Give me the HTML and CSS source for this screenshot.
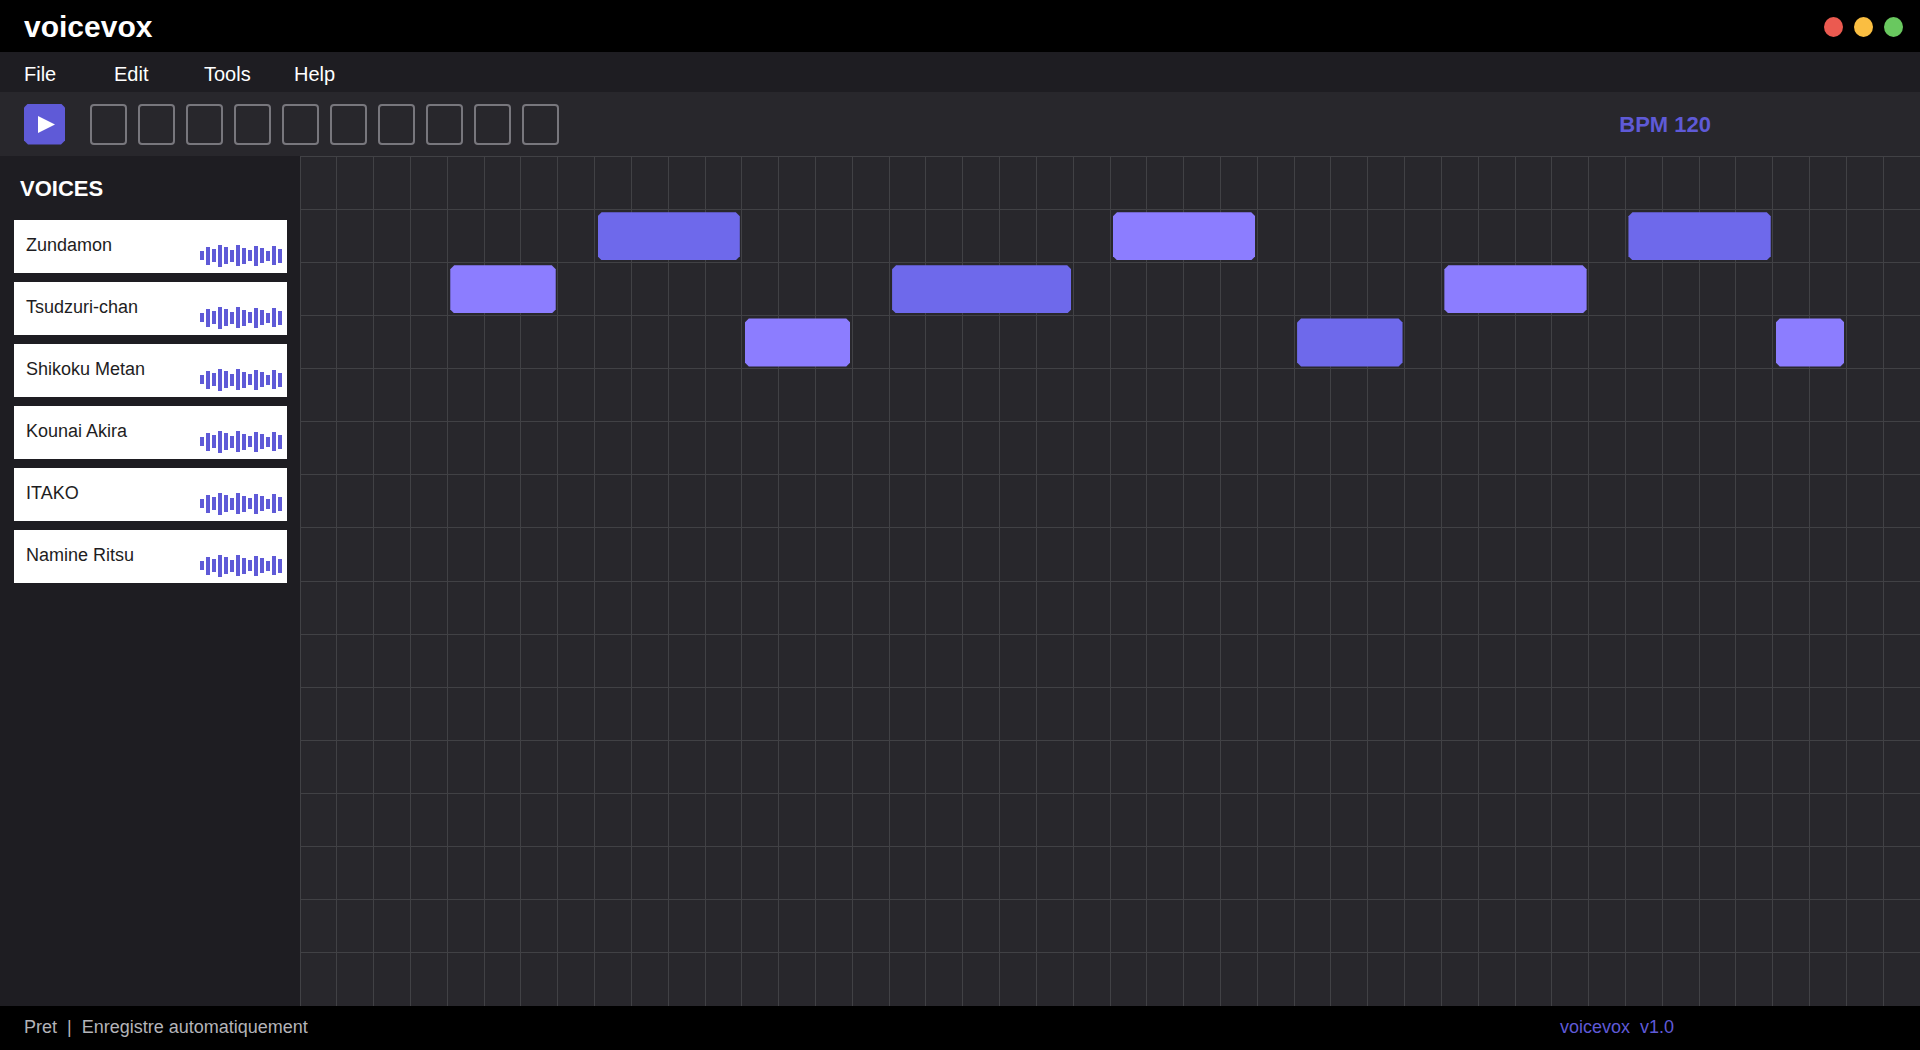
FILE: index.html
```html
<!DOCTYPE html>
<html lang="fr">
<head>
<meta charset="utf-8">
<title>voicevox</title>
<link rel="stylesheet" href="styles.css">
</head>
<body>
<header class="titlebar">
  <h1 class="logo">voicevox</h1>
  <div class="window-controls">
    <button class="dot dot-close" type="button" aria-label="Close"></button>
    <button class="dot dot-min" type="button" aria-label="Minimize"></button>
    <button class="dot dot-max" type="button" aria-label="Maximize"></button>
  </div>
</header>
<nav class="menubar">
  <button class="menu-item" type="button">File</button>
  <button class="menu-item" type="button">Edit</button>
  <button class="menu-item" type="button">Tools</button>
  <button class="menu-item" type="button">Help</button>
</nav>
<div class="toolbar">
  <button class="play" type="button" aria-label="Play"><svg class="play-icon" viewBox="0 0 41 41"><path d="M14 12L31 20.500L14 29Z"/></svg></button>
  <div class="tools">
    <button class="tool" type="button" aria-label="Tool 1"></button>
    <button class="tool" type="button" aria-label="Tool 2"></button>
    <button class="tool" type="button" aria-label="Tool 3"></button>
    <button class="tool" type="button" aria-label="Tool 4"></button>
    <button class="tool" type="button" aria-label="Tool 5"></button>
    <button class="tool" type="button" aria-label="Tool 6"></button>
    <button class="tool" type="button" aria-label="Tool 7"></button>
    <button class="tool" type="button" aria-label="Tool 8"></button>
    <button class="tool" type="button" aria-label="Tool 9"></button>
    <button class="tool" type="button" aria-label="Tool 10"></button>
  </div>
  <span class="bpm">BPM 120</span>
</div>
<main class="workspace">
  <aside class="voices">
    <h2 class="voices-title">VOICES</h2>
    <ul class="voice-list">
      <li class="voice"><span class="voice-name">Zundamon</span><svg class="wave" viewBox="0 0 82 22"><use href="#wave"/></svg></li>
      <li class="voice"><span class="voice-name">Tsudzuri-chan</span><svg class="wave" viewBox="0 0 82 22"><use href="#wave"/></svg></li>
      <li class="voice"><span class="voice-name">Shikoku Metan</span><svg class="wave" viewBox="0 0 82 22"><use href="#wave"/></svg></li>
      <li class="voice"><span class="voice-name">Kounai Akira</span><svg class="wave" viewBox="0 0 82 22"><use href="#wave"/></svg></li>
      <li class="voice"><span class="voice-name">ITAKO</span><svg class="wave" viewBox="0 0 82 22"><use href="#wave"/></svg></li>
      <li class="voice"><span class="voice-name">Namine Ritsu</span><svg class="wave" viewBox="0 0 82 22"><use href="#wave"/></svg></li>
    </ul>
  </aside>
  <section class="roll" aria-label="Piano roll">
    <canvas class="roll-lines" id="lines"></canvas>
    <div class="notes">
      <div class="note note-light row-3 col-5 len-3"></div>
      <div class="note row-2 col-9 len-4"></div>
      <div class="note note-light row-4 col-13 len-3"></div>
      <div class="note row-3 col-17 len-5"></div>
      <div class="note note-light row-2 col-23 len-4"></div>
      <div class="note row-4 col-28 len-3"></div>
      <div class="note note-light row-3 col-32 len-4"></div>
      <div class="note row-2 col-37 len-4"></div>
      <div class="note note-light row-4 col-41 len-2"></div>
    </div>
  </section>
</main>
<footer class="statusbar">
  <span class="status">Pret&nbsp; |&nbsp; Enregistre automatiquement</span>
  <span class="version">voicevox&nbsp; v1.0</span>
</footer>
<svg class="defs" aria-hidden="true">
  <symbol id="wave" viewBox="0 0 82 22">
    <path d="M0 6h4v9h-4zM6 2h4v18h-4zM12 4h4v13h-4zM18 0h4v22h-4zM24 2h4v17h-4zM30 5h4v12h-4zM36 0h4v21h-4zM42 3h4v16h-4zM48 5h4v11h-4zM54 1h4v20h-4zM60 3h4v15h-4zM66 6h4v10h-4zM72 1h4v19h-4zM78 4h4v14h-4z"/>
  </symbol>
</svg>
<script src="grid.js"></script>
</body>
</html>
```
FILE: styles.css
```css
* { box-sizing: border-box; }

body {
  margin: 0;
  min-height: 100vh;
  display: flex;
  flex-direction: column;
  background: #1e1d22;
  color: #ffffff;
  font-family: "Liberation Sans", Arial, sans-serif;
}

button {
  padding: 0;
  border: 0;
  background: none;
  color: inherit;
  font: inherit;
}

.titlebar {
  display: flex;
  align-items: center;
  justify-content: space-between;
  height: 52px;
  padding: 2px 17px 0 24px;
  background: #000000;
}

.logo {
  margin: 0;
  font-size: 30px;
  line-height: 36px;
  font-weight: 700;
}

.window-controls { display: flex; gap: 11px; }
.dot { width: 19px; height: 20px; border-radius: 50%; }
.dot-close { background: #eb5a50; }
.dot-min { background: #fabe41; }
.dot-max { background: #69c85f; }

.menubar {
  display: flex;
  align-items: center;
  height: 40px;
  padding: 4px 24px 0;
}

.menu-item {
  width: 90px;
  font-size: 20px;
  line-height: 24px;
  text-align: left;
}

.toolbar {
  display: flex;
  align-items: center;
  height: 64px;
  padding: 0 209px 0 24px;
  background: #28272c;
}

.play,
.note {
  clip-path: polygon(4px 0, calc(100% - 4px) 0, 100% 4px, 100% calc(100% - 4px), calc(100% - 4px) 100%, 4px 100%, 0 calc(100% - 4px), 0 4px);
}

.play {
  width: 41px;
  height: 41px;
  background: #5f5ad7;
}

.play-icon { display: block; width: 41px; height: 41px; fill: #ffffff; }

.tools { display: flex; gap: 11px; margin-left: 25px; }

.tool {
  width: 37px;
  height: 41px;
  border: 2px solid #78777d;
  border-radius: 4px;
}

.bpm {
  margin-left: auto;
  padding-top: 2px;
  color: #5f5ad7;
  font-size: 22px;
  line-height: 24px;
  font-weight: 700;
}

.workspace {
  flex: 1;
  display: grid;
  grid-template-columns: 300px 1fr;
}

.voices { padding: 21px 13px 20px 14px; }

.voices-title {
  margin: 0 6px 19px;
  font-size: 22px;
  line-height: 24px;
  font-weight: 700;
}

.voice-list {
  display: flex;
  flex-direction: column;
  gap: 9px;
  margin: 0;
  padding: 0;
  list-style: none;
}

.voice {
  display: flex;
  align-items: flex-end;
  justify-content: space-between;
  height: 53px;
  padding: 0 5px 6px 12px;
  background: #ffffff;
  color: #1e1d22;
}

.voice-name {
  padding-bottom: 10px;
  font-size: 18px;
  line-height: 24px;
}

.wave { width: 82px; height: 22px; fill: #5f5ad7; shape-rendering: crispEdges; }

.roll { display: grid; background: #28272c; }
.roll-lines, .notes { grid-area: 1 / 1; width: 100%; height: 100%; min-height: 0; }
.roll-lines { contain: size; }

.notes {
  display: grid;
  grid-template-columns: repeat(44, minmax(0, 1fr));
  grid-template-rows: repeat(16, minmax(0, 1fr));
}

.note {
  margin: 3px 2px 2px 3px;
  background: #6e69eb;
}

.note-light { background: #8c7dff; }

.row-2 { grid-row: 2; }
.row-3 { grid-row: 3; }
.row-4 { grid-row: 4; }
.col-5 { grid-column-start: 5; }
.col-9 { grid-column-start: 9; }
.col-13 { grid-column-start: 13; }
.col-17 { grid-column-start: 17; }
.col-23 { grid-column-start: 23; }
.col-28 { grid-column-start: 28; }
.col-32 { grid-column-start: 32; }
.col-37 { grid-column-start: 37; }
.col-41 { grid-column-start: 41; }
.len-2 { grid-column-end: span 2; }
.len-3 { grid-column-end: span 3; }
.len-4 { grid-column-end: span 4; }
.len-5 { grid-column-end: span 5; }

.statusbar {
  display: flex;
  align-items: center;
  justify-content: space-between;
  height: 44px;
  padding: 0 246px 2px 24px;
  background: #000000;
  font-size: 18px;
  line-height: 24px;
}

.status { color: #b4b4b9; }
.version { color: #5f5ad7; }
.defs { display: none; }
```
FILE: grid.js
```js
// Draws the beat and pitch lines on whole pixels, at any size of the roll.
const canvas = document.getElementById('lines');

function drawLines() {
  const width = canvas.clientWidth;
  const height = canvas.clientHeight;
  canvas.width = width;
  canvas.height = height;
  const ctx = canvas.getContext('2d');
  ctx.fillStyle = '#414145';
  for (let beat = 0; beat < 44; beat++) {
    ctx.fillRect(Math.floor(beat * width / 44), 0, 1, height);
  }
  for (let pitch = 0; pitch < 16; pitch++) {
    ctx.fillRect(0, Math.floor(pitch * height / 16), width, 1);
  }
}

drawLines();
window.addEventListener('resize', drawLines);
```
